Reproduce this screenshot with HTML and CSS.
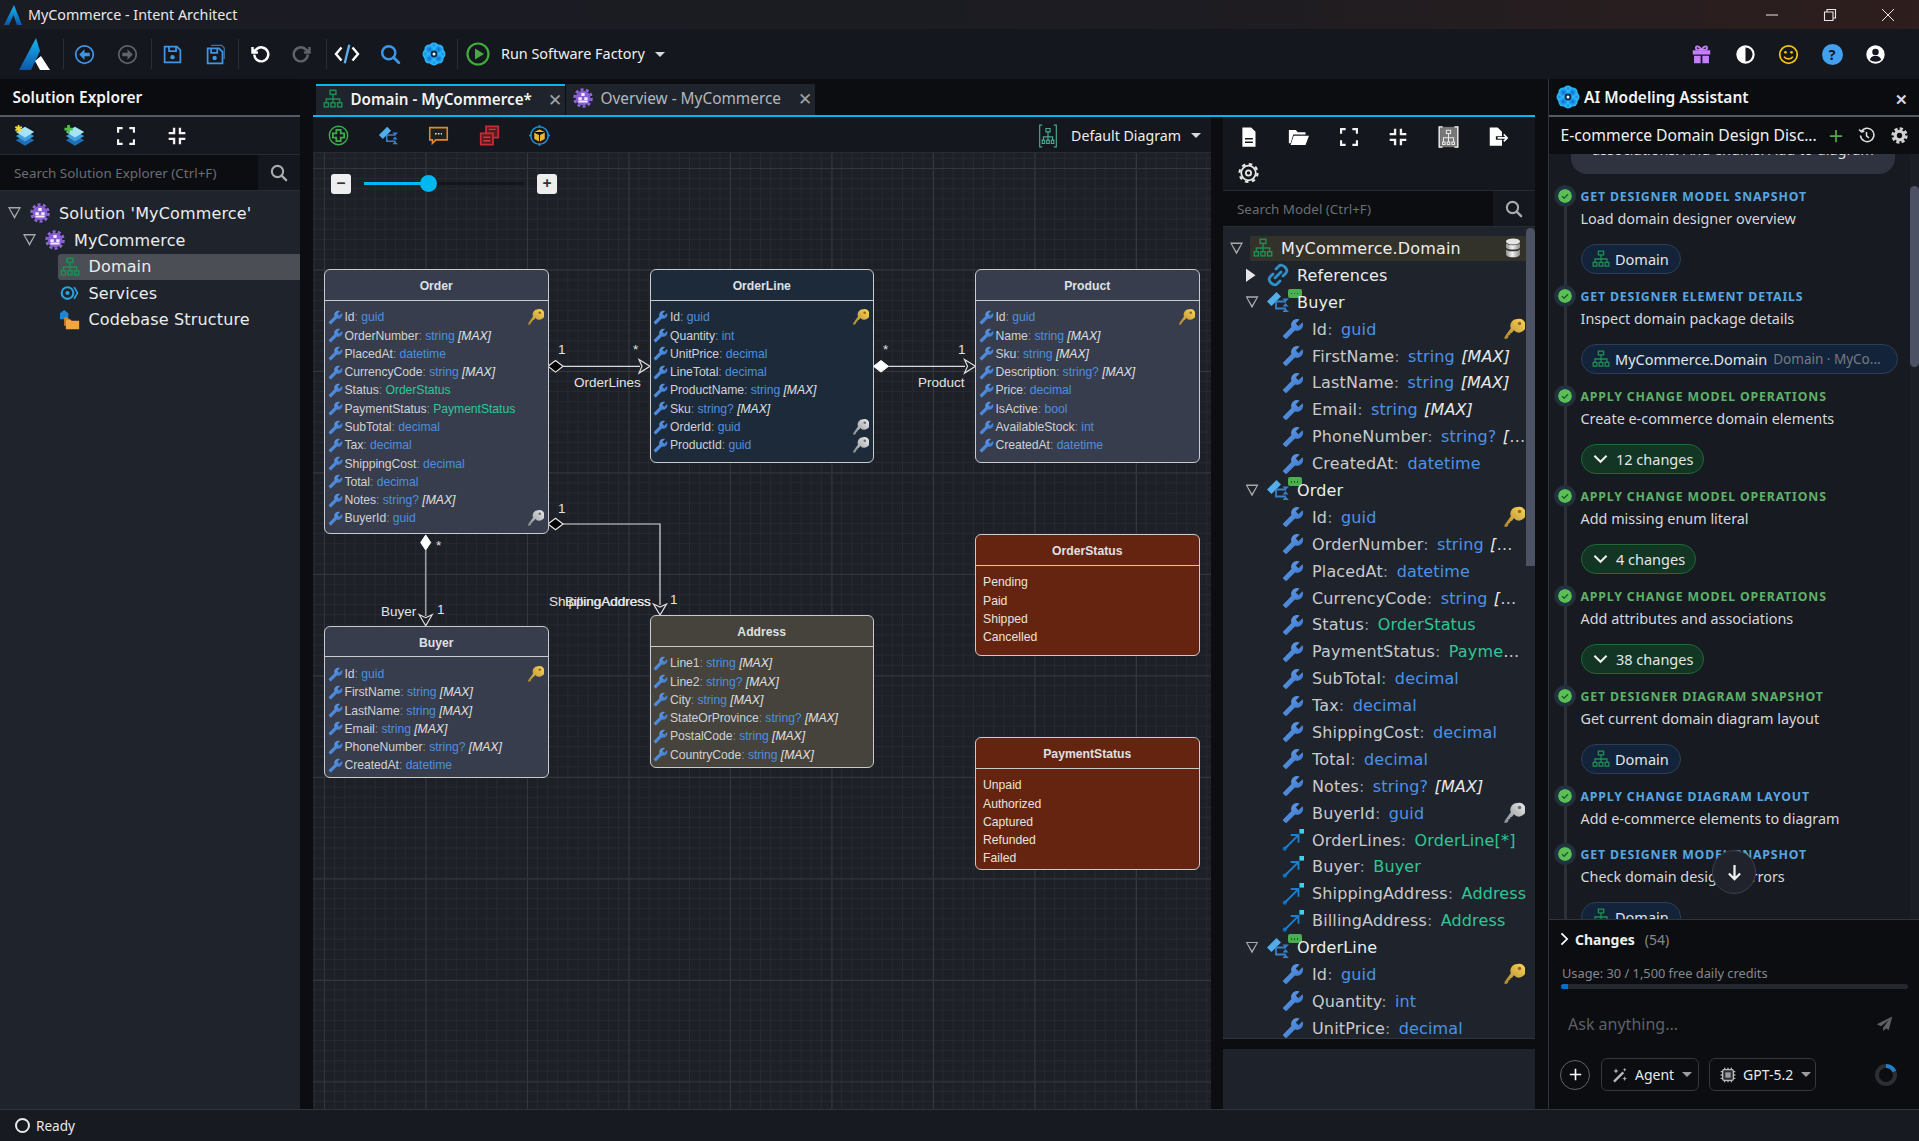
FILE: index.html
```html
<!DOCTYPE html>
<html lang="en">
<head>
    <meta charset="UTF-8">
    <title>MyCommerce - Intent Architect</title>
    <link rel="stylesheet" href="styles.css">
</head>
<body>
    <!-- Shared icons -->
    <svg class="sprite" aria-hidden="true">
        <defs>
            <linearGradient id="g-wrench" x1="0" y1="1" x2="1" y2="0">
                <stop offset="0" stop-color="#2f6cc9"/><stop offset="1" stop-color="#6da6ea"/>
            </linearGradient>
            <linearGradient id="g-gold" x1="0" y1="1" x2="1" y2="0">
                <stop offset="0" stop-color="#a9842c"/><stop offset="1" stop-color="#ffd65a"/>
            </linearGradient>
            <linearGradient id="g-silver" x1="0" y1="1" x2="1" y2="0">
                <stop offset="0" stop-color="#85888c"/><stop offset="1" stop-color="#eceded"/>
            </linearGradient>
            <linearGradient id="g-logo" x1="0" y1="0" x2="0" y2="1">
                <stop offset="0" stop-color="#16b5f2"/><stop offset="1" stop-color="#0d57a8"/>
            </linearGradient>
            <linearGradient id="g-db" x1="0" y1="0" x2="1" y2="0">
                <stop offset="0" stop-color="#8f9091"/><stop offset=".45" stop-color="#f2f2f2"/><stop offset="1" stop-color="#8a8b8c"/>
            </linearGradient>
            <radialGradient id="g-flower">
                <stop offset="0" stop-color="#0e6bd0"/><stop offset="1" stop-color="#2cc2ff"/>
            </radialGradient>
        </defs>
        <symbol id="wrench" viewBox="0 0 24 24">
            <path fill="url(#g-wrench)" transform="translate(24 0) scale(-1 1)" d="M22.7 19l-9.1-9.1c.9-2.3.4-5-1.5-6.9-2-2-5-2.4-7.4-1.3L9 6 6 9 1.6 4.7C.4 7.1.9 10.1 2.9 12.1c1.9 1.9 4.6 2.4 6.9 1.5l9.1 9.1c.4.4 1 .4 1.4 0l2.3-2.3c.5-.4.5-1.1.1-1.4z"/>
        </symbol>
        <symbol id="key" viewBox="0 0 24 24">
            <path fill="url(#g-gold)" d="M15.5 1a7.5 7.5 0 0 0-7 10.2L1.8 20.4 1.5 23l2.8-.3 1.5-1.8.2-2 1.8-.4.3-2 1.8-.5 1.9-2.6A7.5 7.5 0 1 0 15.500 1z"/>
            <circle cx="18" cy="6" r="1.900" fill="#8a6a1c"/>
        </symbol>
        <symbol id="key-silver" viewBox="0 0 24 24">
            <path fill="url(#g-silver)" d="M15.5 1a7.5 7.5 0 0 0-7 10.2L1.8 20.4 1.5 23l2.8-.3 1.5-1.8.2-2 1.8-.4.3-2 1.8-.5 1.9-2.6A7.5 7.5 0 1 0 15.500 1z"/>
            <circle cx="18" cy="6" r="1.900" fill="#6b6d70"/>
        </symbol>
        <symbol id="org" viewBox="0 0 24 24">
            <g fill="none" stroke="#1f8f52" stroke-width="1.700">
                <rect x="8.500" y="1.500" width="7" height="5"/>
                <path d="M12 6.500V12M4 16v-4h16v4M12 12v4"/>
                <rect x="1.500" y="16.500" width="5" height="5"/>
                <rect x="9.500" y="16.500" width="5" height="5"/>
                <rect x="17.500" y="16.500" width="5" height="5"/>
            </g>
        </symbol>
        <symbol id="gear-solution" viewBox="0 0 24 24">
            <circle cx="12" cy="12" r="10.200" fill="none" stroke="#9068dc" stroke-width="3" stroke-dasharray="3.600 2.800"/>
            <circle cx="12" cy="12" r="8.800" fill="#8a5fd6"/>
            <path fill="#f2ecff" d="M10 6h4v3.500h-4zM6.500 11h4v3.500h-4zM13.500 11h4v3.500h-4zM6.500 15h11v2.500h-11z"/>
        </symbol>
        <symbol id="flower" viewBox="0 0 24 24">
            <g fill="url(#g-flower)">
                <circle cx="12" cy="5.500" r="5"/><circle cx="12" cy="18.500" r="5"/>
                <circle cx="5.500" cy="12" r="5"/><circle cx="18.500" cy="12" r="5"/>
                <circle cx="7.400" cy="7.400" r="5"/><circle cx="16.600" cy="7.400" r="5"/>
                <circle cx="7.400" cy="16.600" r="5"/><circle cx="16.600" cy="16.600" r="5"/>
            </g>
            <circle cx="12" cy="12" r="3.400" fill="#0b2a4a"/>
            <circle cx="12" cy="12" r="1.500" fill="#e8f6ff"/>
        </symbol>
        <symbol id="class" viewBox="0 0 24 24">
            <path fill="#52aee8" d="M1 11.500L10.500 2l4.500 4.500L5.500 16z"/>
            <path fill="none" stroke="#3b7fc8" stroke-width="1.800" d="M10 11.500h10M10 11.500v7h10"/>
            <path fill="#3b7fc8" d="M23 8.500l-3.500 3.500-3-3.500zM23 22l-3.500-3.500-3 3.500zM19.500 13l3 3.500h-6z"/>
        </symbol>
        <symbol id="assoc" viewBox="0 0 24 24">
            <circle cx="3" cy="21.500" r="2.300" fill="#0a6fc2"/>
            <path fill="none" stroke="#1a80d0" stroke-width="2" d="M3.500 21L17 7.500M9.500 6.500H18V15"/>
            <rect x="19" y="0" width="5" height="5" fill="#3fd0ec"/>
        </symbol>
        <symbol id="stack" viewBox="0 0 24 24">
            <path fill="#1d6fb8" d="M12 11l10 5.500-10 6-10-6z"/>
            <path fill="#3fa0dc" d="M12 6.500l10 5.500-10 6-10-6z"/>
            <path fill="#a5e4f5" d="M12 2l10 5.500-10 6-10-6z"/>
        </symbol>
        <symbol id="expand" viewBox="0 0 24 24">
            <path fill="none" stroke="#f2f2f2" stroke-width="2.600" d="M2.500 8V2.500H8M16 2.500h5.500V8M21.500 16v5.500H16M8 21.500H2.500V16"/>
        </symbol>
        <symbol id="collapse" viewBox="0 0 24 24">
            <path fill="none" stroke="#f2f2f2" stroke-width="2.800" d="M8.500 2v6.500H2M15.500 2v6.500H22M15.500 22v-6.500H22M8.500 22v-6.500H2"/>
        </symbol>
        <symbol id="search" viewBox="0 0 24 24">
            <circle cx="10" cy="10" r="7.500" fill="none" stroke="currentColor" stroke-width="2.800"/>
            <path stroke="currentColor" stroke-width="3.200" stroke-linecap="round" d="M15.500 15.500l6 6"/>
        </symbol>
        <symbol id="check" viewBox="0 0 14 14">
            <circle cx="7" cy="7" r="7" fill="#5cbf56"/>
            <path fill="none" stroke="#1f5e30" stroke-width="1.500" d="M4 7.200l2.100 2.100L10 5.200"/>
        </symbol>
    </svg>

    <header class="titlebar">
        <svg class="title-logo" viewBox="0 0 18 20"><path fill="url(#g-logo)" d="M10 0l8 20h-5L9.500 10 5 20H0z"/></svg>
        <span class="title-text">MyCommerce - Intent Architect</span>
        <div class="window-controls">
            <svg viewBox="0 0 14 14"><path stroke="#e8e8e8" stroke-width="1" d="M1 7h12"/></svg>
            <svg viewBox="0 0 14 14"><path fill="none" stroke="#e8e8e8" stroke-width="1.100" d="M1.500 4h8.500v8.500H1.500zM4 4V1.500h8.500V10H10"/></svg>
            <svg viewBox="0 0 14 14"><path stroke="#e8e8e8" stroke-width="1" d="M1 1l12 12M13 1L1 13"/></svg>
        </div>
    </header>

    <nav class="toolbar">
        <svg class="main-logo" viewBox="0 0 31 32"><path fill="url(#g-logo)" d="M17 0l4 13-9 19H0z"/><path fill="#fff" d="M16 23l6-5 9 14H21z"/></svg>
        <span class="sep sep-first"></span>
        <button class="tool"><svg viewBox="0 0 24 24"><circle cx="12" cy="12" r="10" fill="none" stroke="#3f95e6" stroke-width="2"/><path fill="#3f95e6" d="M6 12l6-6v4h6v4h-6v4z"/></svg></button>
        <button class="tool"><svg viewBox="0 0 24 24"><circle cx="12" cy="12" r="10" fill="none" stroke="#5f6368" stroke-width="2"/><path fill="#5f6368" d="M18 12l-6-6v4H6v4h6v4z"/></svg></button>
        <span class="sep"></span>
        <button class="tool"><svg viewBox="0 0 24 24"><path fill="none" stroke="#3f95e6" stroke-width="2" d="M3 3h14l4 4v14H3z"/><path fill="none" stroke="#3f95e6" stroke-width="2" d="M8 3v5h8V3"/><circle cx="12" cy="15" r="2.500" fill="#3f95e6"/></svg></button>
        <button class="tool"><svg viewBox="0 0 24 24"><path fill="none" stroke="#3f6f9e" stroke-width="1.500" d="M7 1.500h12l3 3V17"/><path fill="none" stroke="#3f95e6" stroke-width="2" d="M3 5h13l4 4v13H3z"/><path fill="none" stroke="#3f95e6" stroke-width="2" d="M7 5v5h7V5"/><circle cx="11" cy="16" r="2.500" fill="#3f95e6"/></svg></button>
        <span class="sep"></span>
        <button class="tool"><svg viewBox="0 0 24 24"><path fill="none" stroke="#fff" stroke-width="2.800" d="M6 12a8 8 0 1 0 2.500-6L4 9.500M4 3.500v6.200h6.200"/></svg></button>
        <button class="tool"><svg viewBox="0 0 24 24"><path fill="none" stroke="#5f6368" stroke-width="2.800" d="M18 12a8 8 0 1 1-2.500-6L20 9.500M20 3.500v6.200h-6.200"/></svg></button>
        <span class="sep"></span>
        <button class="tool"><svg class="wide" viewBox="0 0 28 24"><path fill="none" stroke="#fff" stroke-width="2.600" d="M8 5l-6 7 6 7M20 5l6 7-6 7"/><path stroke="#5ab0ee" stroke-width="2.600" d="M16.500 2l-5 20"/></svg></button>
        <button class="tool tool-blue"><svg><use href="#search"/></svg></button>
        <button class="tool"><svg class="big" viewBox="0 0 24 24"><use href="#flower"/></svg></button>
        <span class="sep"></span>
        <button class="tool"><svg class="big" viewBox="0 0 24 24"><circle cx="12" cy="12" r="10.500" fill="none" stroke="#3fae3a" stroke-width="2.200"/><path fill="#3fae3a" d="M9 6.500l9 5.500-9 5.500z"/></svg></button>
        <span class="run-label">Run Software Factory</span>
        <span class="caret run-caret"></span>
        <div class="toolbar-right">
            <svg viewBox="0 0 24 24"><path fill="#c77dff" d="M2 7h20v5H2zM3.500 13.500h7.500V22H3.500zM13 13.500h7.500V22H13z"/><path fill="none" stroke="#c77dff" stroke-width="2" d="M12 7C9 1 4 2 6 6l6 1c3-6 8-5 6-1z"/></svg>
            <svg viewBox="0 0 24 24"><circle cx="12" cy="12" r="10.500" fill="#fff"/><path fill="#14171d" d="M12 4a8 8 0 0 1 0 16z"/></svg>
            <svg viewBox="0 0 24 24"><circle cx="12" cy="12" r="10" fill="none" stroke="#f1c40f" stroke-width="2"/><circle cx="8.500" cy="9.500" r="1.500" fill="#f1c40f"/><circle cx="15.500" cy="9.500" r="1.500" fill="#f1c40f"/><path fill="none" stroke="#f1c40f" stroke-width="2" d="M7 14.500c2 3.500 8 3.500 10 0"/></svg>
            <span class="help-icon">?</span>
            <svg viewBox="0 0 24 24"><circle cx="12" cy="12" r="10.500" fill="#fff"/><circle cx="12" cy="9" r="3.700" fill="#14171d"/><path fill="#14171d" d="M5.500 18c1.500-6 11.500-6 13 0-3 3-10 3-13 0z"/></svg>
        </div>
    </nav>

    <main class="workspace">
        <!-- Solution explorer -->
        <aside class="explorer">
            <h2 class="panel-title">Solution Explorer</h2>
            <div class="explorer-tools">
                <svg viewBox="0 0 24 24"><use href="#stack"/><path fill="#f4d83a" d="M4 0h2v2.300l2-1.100 1 1.700-2 1.100 2 1.100-1 1.700-2-1.100V8H4V5.700L2 6.800 1 5.100l2-1.100-2-1.100 1-1.700 2 1.100z"/></svg>
                <svg viewBox="0 0 24 24"><use href="#stack"/><path fill="#4cc24a" d="M3.500 0h3v3h3v3h-3v3h-3V6h-3V3h3z"/></svg>
                <svg class="small"><use href="#expand"/></svg>
                <svg class="small"><use href="#collapse"/></svg>
            </div>
            <div class="searchbox">
                <span class="search-text">Search Solution Explorer (Ctrl+F)</span>
                <span class="search-btn"><svg><use href="#search"/></svg></span>
            </div>
            <ul class="tree sol-tree">
                <li class="sol-row lvl0"><span class="twist open"></span><svg class="ti"><use href="#gear-solution"/></svg><span>Solution 'MyCommerce'</span></li>
                <li class="sol-row lvl1"><span class="twist open"></span><svg class="ti"><use href="#gear-solution"/></svg><span>MyCommerce</span></li>
                <li class="sol-row lvl2 selected"><svg class="ti"><use href="#org"/></svg><span>Domain</span></li>
                <li class="sol-row lvl2"><svg class="ti" viewBox="0 0 24 24"><circle cx="9" cy="12" r="7" fill="none" stroke="#2ba3dd" stroke-width="2.500"/><circle cx="9" cy="12" r="2.500" fill="#2ba3dd"/><path fill="none" stroke="#2ba3dd" stroke-width="2" d="M17 5l4 7-4 7"/></svg><span>Services</span></li>
                <li class="sol-row lvl2"><svg class="ti" viewBox="0 0 24 24"><path fill="#1b87d6" d="M0 4l5-4 5 4v7H0z"/><path fill="#f3a640" d="M7 11h5l2 2h9v10H7z"/><path fill="#d8872a" d="M5 9h4l2 2H7v8H5z"/></svg><span>Codebase Structure</span></li>
            </ul>
        </aside>

        <section class="editor">
            <div class="tabs">
                <div class="tab active"><svg class="tab-icon"><use href="#org"/></svg><span>Domain - MyCommerce*</span><span class="tab-close">&#10005;</span></div>
                <div class="tab"><svg class="tab-icon"><use href="#gear-solution"/></svg><span>Overview - MyCommerce</span><span class="tab-close">&#10005;</span></div>
            </div>
            <div class="editor-body">
                <div class="designer">
                    <div class="designer-tools">
                        <svg viewBox="0 0 24 24"><circle cx="12" cy="12" r="10.500" fill="none" stroke="#3fae4a" stroke-width="1.600"/><path fill="none" stroke="#3fae4a" stroke-width="2" d="M9.500 5.500h5v4h4v5h-4v4h-5v-4h-4v-5h4z"/></svg>
                        <svg><use href="#class"/></svg>
                        <svg viewBox="0 0 24 24"><path fill="#22201c" stroke="#e08a2a" stroke-width="1.800" d="M2 3h20v14H9l-4 4v-4H2z"/><path stroke="#e8e8e8" stroke-width="1.800" stroke-dasharray="1.800 1.500" d="M8 10h8"/></svg>
                        <svg viewBox="0 0 24 24"><path fill="#5a1a22" stroke="#c52c36" stroke-width="2" d="M8 1.500h14v13H8z"/><path fill="#5a1a22" stroke="#c52c36" stroke-width="2" d="M2 9.500h14v13H2z"/><path stroke="#d8343c" stroke-width="1.600" d="M5 14h8M5 18h8M11 5h8"/></svg>
                        <svg viewBox="0 0 24 24"><circle cx="12" cy="12" r="10" fill="none" stroke="#1f8fe0" stroke-width="1.800"/><path stroke="#1f8fe0" stroke-width="1.800" d="M12 0v3M12 21v3M0 12h3M21 12h3"/><path fill="#f3b32c" d="M12 5l6 3v8l-6 3-6-3V8z"/><path stroke="#14171d" stroke-width="1.200" d="M6 8l6 3 6-3M12 11v8"/></svg>
                        <div class="diagram-select">
                            <svg viewBox="0 0 24 28"><path fill="none" stroke="#4aa890" stroke-width="1.400" d="M5 1H2v26h3M19 1h3v26h-3M9.500 5h5v4h-5zM12 9v6M6.500 19v-4h11v4M12 15v4M5 19h3v4H5zM10.500 19h3v4h-3zM16 19h3v4h-3z"/></svg>
                            <span>Default Diagram</span>
                            <span class="caret"></span>
                        </div>
                    </div>
                    <div class="canvas">
                        <div class="zoomer">
                            <span class="zoom-btn">&minus;</span>
                            <span class="zoom-track"><span class="zoom-fill"></span><span class="zoom-thumb"></span></span>
                            <span class="zoom-btn">+</span>
                        </div>

                        <svg class="links">
                            <path class="link" d="M250 213.300H327"/>
                            <path class="link" d="M575.600 213.300H652"/>
                            <path class="link" d="M250 371H347V452"/>
                            <path class="link link-grey" d="M112.700 397V463"/>
                            <path class="tip" d="M337 213.300l-11-6.800 3 6.800-3 6.800z"/>
                            <path class="tip" d="M662.500 213.300l-11-6.800 3 6.800-3 6.800z"/>
                            <path class="tip" d="M347 462l-6.500-11 6.500 3 6.500-3z"/>
                            <path class="tip" d="M112.700 472.700l-6.500-11 6.500 3 6.500-3z"/>
                            <path class="diamond" d="M235 213.300l7.500-5.800 7.500 5.800-7.500 5.800z"/>
                            <path class="diamond" d="M235 371l7.500-5.800 7.500 5.800-7.500 5.800z"/>
                            <path class="diamond-white" d="M560.500 213.300l7.500-5.800 7.500 5.800-7.500 5.800z"/>
                            <path class="diamond-white" d="M112.700 382l5 7.500-5 7.500-5-7.500z"/>
                            <text x="245" y="201">1</text>
                            <text x="320" y="201">*</text>
                            <text x="261" y="234">OrderLines</text>
                            <text x="570" y="201">*</text>
                            <text x="645" y="201">1</text>
                            <text x="605" y="234">Product</text>
                            <text x="245" y="360">1</text>
                            <text x="357" y="451">1</text>
                            <text x="236" y="453">ShippingAddress</text>
                            <text x="252" y="453">BillingAddress</text>
                            <text x="68" y="463">Buyer</text>
                            <text x="124" y="461">1</text>
                            <text x="123" y="397">*</text>
                        </svg>

                        <div class="node node-order">
                            <div class="node-head">Order</div>
                            <div class="node-body">
                                <div class="attr"><svg class="w"><use href="#wrench"/></svg><span>Id<i class="c">:</i> <b>guid</b></span><svg class="k"><use href="#key"/></svg></div>
                                <div class="attr"><svg class="w"><use href="#wrench"/></svg><span>OrderNumber<i class="c">:</i> <b>string</b> <em>[MAX]</em></span></div>
                                <div class="attr"><svg class="w"><use href="#wrench"/></svg><span>PlacedAt<i class="c">:</i> <b>datetime</b></span></div>
                                <div class="attr"><svg class="w"><use href="#wrench"/></svg><span>CurrencyCode<i class="c">:</i> <b>string</b> <em>[MAX]</em></span></div>
                                <div class="attr"><svg class="w"><use href="#wrench"/></svg><span>Status<i class="c">:</i> <b class="enum">OrderStatus</b></span></div>
                                <div class="attr"><svg class="w"><use href="#wrench"/></svg><span>PaymentStatus<i class="c">:</i> <b class="enum">PaymentStatus</b></span></div>
                                <div class="attr"><svg class="w"><use href="#wrench"/></svg><span>SubTotal<i class="c">:</i> <b>decimal</b></span></div>
                                <div class="attr"><svg class="w"><use href="#wrench"/></svg><span>Tax<i class="c">:</i> <b>decimal</b></span></div>
                                <div class="attr"><svg class="w"><use href="#wrench"/></svg><span>ShippingCost<i class="c">:</i> <b>decimal</b></span></div>
                                <div class="attr"><svg class="w"><use href="#wrench"/></svg><span>Total<i class="c">:</i> <b>decimal</b></span></div>
                                <div class="attr"><svg class="w"><use href="#wrench"/></svg><span>Notes<i class="c">:</i> <b>string?</b> <em>[MAX]</em></span></div>
                                <div class="attr"><svg class="w"><use href="#wrench"/></svg><span>BuyerId<i class="c">:</i> <b>guid</b></span><svg class="k"><use href="#key-silver"/></svg></div>
                            </div>
                        </div>

                        <div class="node node-line">
                            <div class="node-head">OrderLine</div>
                            <div class="node-body">
                                <div class="attr"><svg class="w"><use href="#wrench"/></svg><span>Id<i class="c">:</i> <b>guid</b></span><svg class="k"><use href="#key"/></svg></div>
                                <div class="attr"><svg class="w"><use href="#wrench"/></svg><span>Quantity<i class="c">:</i> <b>int</b></span></div>
                                <div class="attr"><svg class="w"><use href="#wrench"/></svg><span>UnitPrice<i class="c">:</i> <b>decimal</b></span></div>
                                <div class="attr"><svg class="w"><use href="#wrench"/></svg><span>LineTotal<i class="c">:</i> <b>decimal</b></span></div>
                                <div class="attr"><svg class="w"><use href="#wrench"/></svg><span>ProductName<i class="c">:</i> <b>string</b> <em>[MAX]</em></span></div>
                                <div class="attr"><svg class="w"><use href="#wrench"/></svg><span>Sku<i class="c">:</i> <b>string?</b> <em>[MAX]</em></span></div>
                                <div class="attr"><svg class="w"><use href="#wrench"/></svg><span>OrderId<i class="c">:</i> <b>guid</b></span><svg class="k"><use href="#key-silver"/></svg></div>
                                <div class="attr"><svg class="w"><use href="#wrench"/></svg><span>ProductId<i class="c">:</i> <b>guid</b></span><svg class="k"><use href="#key-silver"/></svg></div>
                            </div>
                        </div>

                        <div class="node node-product">
                            <div class="node-head">Product</div>
                            <div class="node-body">
                                <div class="attr"><svg class="w"><use href="#wrench"/></svg><span>Id<i class="c">:</i> <b>guid</b></span><svg class="k"><use href="#key"/></svg></div>
                                <div class="attr"><svg class="w"><use href="#wrench"/></svg><span>Name<i class="c">:</i> <b>string</b> <em>[MAX]</em></span></div>
                                <div class="attr"><svg class="w"><use href="#wrench"/></svg><span>Sku<i class="c">:</i> <b>string</b> <em>[MAX]</em></span></div>
                                <div class="attr"><svg class="w"><use href="#wrench"/></svg><span>Description<i class="c">:</i> <b>string?</b> <em>[MAX]</em></span></div>
                                <div class="attr"><svg class="w"><use href="#wrench"/></svg><span>Price<i class="c">:</i> <b>decimal</b></span></div>
                                <div class="attr"><svg class="w"><use href="#wrench"/></svg><span>IsActive<i class="c">:</i> <b>bool</b></span></div>
                                <div class="attr"><svg class="w"><use href="#wrench"/></svg><span>AvailableStock<i class="c">:</i> <b>int</b></span></div>
                                <div class="attr"><svg class="w"><use href="#wrench"/></svg><span>CreatedAt<i class="c">:</i> <b>datetime</b></span></div>
                            </div>
                        </div>

                        <div class="node node-buyer">
                            <div class="node-head">Buyer</div>
                            <div class="node-body">
                                <div class="attr"><svg class="w"><use href="#wrench"/></svg><span>Id<i class="c">:</i> <b>guid</b></span><svg class="k"><use href="#key"/></svg></div>
                                <div class="attr"><svg class="w"><use href="#wrench"/></svg><span>FirstName<i class="c">:</i> <b>string</b> <em>[MAX]</em></span></div>
                                <div class="attr"><svg class="w"><use href="#wrench"/></svg><span>LastName<i class="c">:</i> <b>string</b> <em>[MAX]</em></span></div>
                                <div class="attr"><svg class="w"><use href="#wrench"/></svg><span>Email<i class="c">:</i> <b>string</b> <em>[MAX]</em></span></div>
                                <div class="attr"><svg class="w"><use href="#wrench"/></svg><span>PhoneNumber<i class="c">:</i> <b>string?</b> <em>[MAX]</em></span></div>
                                <div class="attr"><svg class="w"><use href="#wrench"/></svg><span>CreatedAt<i class="c">:</i> <b>datetime</b></span></div>
                            </div>
                        </div>

                        <div class="node node-address">
                            <div class="node-head">Address</div>
                            <div class="node-body">
                                <div class="attr"><svg class="w"><use href="#wrench"/></svg><span>Line1<i class="c">:</i> <b>string</b> <em>[MAX]</em></span></div>
                                <div class="attr"><svg class="w"><use href="#wrench"/></svg><span>Line2<i class="c">:</i> <b>string?</b> <em>[MAX]</em></span></div>
                                <div class="attr"><svg class="w"><use href="#wrench"/></svg><span>City<i class="c">:</i> <b>string</b> <em>[MAX]</em></span></div>
                                <div class="attr"><svg class="w"><use href="#wrench"/></svg><span>StateOrProvince<i class="c">:</i> <b>string?</b> <em>[MAX]</em></span></div>
                                <div class="attr"><svg class="w"><use href="#wrench"/></svg><span>PostalCode<i class="c">:</i> <b>string</b> <em>[MAX]</em></span></div>
                                <div class="attr"><svg class="w"><use href="#wrench"/></svg><span>CountryCode<i class="c">:</i> <b>string</b> <em>[MAX]</em></span></div>
                            </div>
                        </div>

                        <div class="node node-enum node-status">
                            <div class="node-head">OrderStatus</div>
                            <div class="node-body">
                                <div class="literal">Pending</div>
                                <div class="literal">Paid</div>
                                <div class="literal">Shipped</div>
                                <div class="literal">Cancelled</div>
                            </div>
                        </div>

                        <div class="node node-enum node-payment">
                            <div class="node-head">PaymentStatus</div>
                            <div class="node-body">
                                <div class="literal">Unpaid</div>
                                <div class="literal">Authorized</div>
                                <div class="literal">Captured</div>
                                <div class="literal">Refunded</div>
                                <div class="literal">Failed</div>
                            </div>
                        </div>
                    </div>
                </div>

                <!-- Model tree -->
                <div class="model">
                    <div class="model-tools">
                        <svg viewBox="0 0 24 24"><path fill="#fff" d="M5 1h10l5 5v17H5z"/><path stroke="#14171d" stroke-width="1.800" d="M8 14h9M8 18h9"/></svg>
                        <svg viewBox="0 0 24 24"><path fill="#fff" d="M1 4h8l2 2.500h9V9H6L3 19H1z"/><path fill="#fff" d="M6.500 10.500H24L20 21H3z"/></svg>
                        <svg class="small"><use href="#expand"/></svg>
                        <svg class="small"><use href="#collapse"/></svg>
                        <svg viewBox="0 0 24 26"><path fill="#777" d="M2 1h20v24H2z"/><path fill="none" stroke="#fff" stroke-width="1.600" d="M5 1H1v24h4M19 1h4v24h-4"/><path fill="none" stroke="#e8e8e8" stroke-width="1.200" d="M9.500 5h5v4h-5zM12 9v5M6 19v-5h12v5M12 14v5M5 19h3v3H5zM10.500 19h3v3h-3zM16 19h3v3h-3z"/></svg>
                        <svg viewBox="0 0 24 24"><path fill="#fff" d="M2 1h9l5 5v5H9v4h7v7H2z"/><path fill="none" stroke="#fff" stroke-width="1.800" d="M11 13h11M18 9l4 4-4 4"/></svg>
                        <svg viewBox="0 0 24 24"><circle cx="12" cy="12" r="8.300" fill="none" stroke="#e8e8e8" stroke-width="2"/><circle cx="12" cy="12" r="10.300" fill="none" stroke="#e8e8e8" stroke-width="2.500" stroke-dasharray="4 4.090"/><circle cx="12" cy="12" r="3" fill="none" stroke="#e8e8e8" stroke-width="2"/></svg>
                    </div>
                    <div class="searchbox">
                        <span class="search-text">Search Model (Ctrl+F)</span>
                        <span class="search-btn"><svg><use href="#search"/></svg></span>
                    </div>
                    <div class="model-tree">
                        <div class="scroll-thumb"></div>
                        <ul class="tree">
                            <li class="m-row m-root"><span class="twist open"></span><span class="root-band"><svg class="ti"><use href="#org"/></svg><span>MyCommerce.Domain</span><svg class="db" viewBox="0 0 20 24"><ellipse cx="10" cy="4" rx="8" ry="3.500" fill="#e4e4e4"/><path fill="url(#g-db)" d="M2 6c2 3 14 3 16 0v5c-2 3-14 3-16 0zM2 13c2 3 14 3 16 0v6c-2 4-14 4-16 0z"/></svg></span></li>
                            <li class="m-row m-class"><span class="twist closed"></span><svg class="ti" viewBox="0 0 24 24"><path fill="none" stroke="#2f8fc9" stroke-width="2.800" stroke-linecap="round" d="M10 6l3-3c3-3 10 3 7 7l-3 3M14 18l-3 3c-3 3-10-3-7-7l3-3M9 15l6-6"/></svg><span>References</span></li>

                            <li class="m-row m-class"><span class="twist open"></span><svg class="ti"><use href="#class"/></svg><span class="m-note"></span><span class="m-name">Buyer</span></li>
                            <li class="m-row m-attr"><svg class="ti"><use href="#wrench"/></svg><span class="m-text">Id<i class="c">:</i> <b>guid</b></span><svg class="m-key"><use href="#key"/></svg></li>
                            <li class="m-row m-attr"><svg class="ti"><use href="#wrench"/></svg><span class="m-text">FirstName<i class="c">:</i> <b>string</b> <em>[MAX]</em></span></li>
                            <li class="m-row m-attr"><svg class="ti"><use href="#wrench"/></svg><span class="m-text">LastName<i class="c">:</i> <b>string</b> <em>[MAX]</em></span></li>
                            <li class="m-row m-attr"><svg class="ti"><use href="#wrench"/></svg><span class="m-text">Email<i class="c">:</i> <b>string</b> <em>[MAX]</em></span></li>
                            <li class="m-row m-attr"><svg class="ti"><use href="#wrench"/></svg><span class="m-text">PhoneNumber<i class="c">:</i> <b>string?</b> <em>[MAX]</em></span></li>
                            <li class="m-row m-attr"><svg class="ti"><use href="#wrench"/></svg><span class="m-text">CreatedAt<i class="c">:</i> <b>datetime</b></span></li>

                            <li class="m-row m-class"><span class="twist open"></span><svg class="ti"><use href="#class"/></svg><span class="m-note"></span><span class="m-name">Order</span></li>
                            <li class="m-row m-attr"><svg class="ti"><use href="#wrench"/></svg><span class="m-text">Id<i class="c">:</i> <b>guid</b></span><svg class="m-key"><use href="#key"/></svg></li>
                            <li class="m-row m-attr"><svg class="ti"><use href="#wrench"/></svg><span class="m-text">OrderNumber<i class="c">:</i> <b>string</b> <em>[MAX]</em></span></li>
                            <li class="m-row m-attr"><svg class="ti"><use href="#wrench"/></svg><span class="m-text">PlacedAt<i class="c">:</i> <b>datetime</b></span></li>
                            <li class="m-row m-attr"><svg class="ti"><use href="#wrench"/></svg><span class="m-text">CurrencyCode<i class="c">:</i> <b>string</b> <em>[MAX]</em></span></li>
                            <li class="m-row m-attr"><svg class="ti"><use href="#wrench"/></svg><span class="m-text">Status<i class="c">:</i> <b class="enum">OrderStatus</b></span></li>
                            <li class="m-row m-attr"><svg class="ti"><use href="#wrench"/></svg><span class="m-text">PaymentStatus<i class="c">:</i> <b class="enum">PaymentStatus</b></span></li>
                            <li class="m-row m-attr"><svg class="ti"><use href="#wrench"/></svg><span class="m-text">SubTotal<i class="c">:</i> <b>decimal</b></span></li>
                            <li class="m-row m-attr"><svg class="ti"><use href="#wrench"/></svg><span class="m-text">Tax<i class="c">:</i> <b>decimal</b></span></li>
                            <li class="m-row m-attr"><svg class="ti"><use href="#wrench"/></svg><span class="m-text">ShippingCost<i class="c">:</i> <b>decimal</b></span></li>
                            <li class="m-row m-attr"><svg class="ti"><use href="#wrench"/></svg><span class="m-text">Total<i class="c">:</i> <b>decimal</b></span></li>
                            <li class="m-row m-attr"><svg class="ti"><use href="#wrench"/></svg><span class="m-text">Notes<i class="c">:</i> <b>string?</b> <em>[MAX]</em></span></li>
                            <li class="m-row m-attr"><svg class="ti"><use href="#wrench"/></svg><span class="m-text">BuyerId<i class="c">:</i> <b>guid</b></span><svg class="m-key"><use href="#key-silver"/></svg></li>
                            <li class="m-row m-attr"><svg class="ti"><use href="#assoc"/></svg><span class="m-text m-free">OrderLines<i class="c">:</i> <b class="enum">OrderLine[*]</b></span></li>
                            <li class="m-row m-attr"><svg class="ti"><use href="#assoc"/></svg><span class="m-text m-free">Buyer<i class="c">:</i> <b class="enum">Buyer</b></span></li>
                            <li class="m-row m-attr"><svg class="ti"><use href="#assoc"/></svg><span class="m-text m-free">ShippingAddress<i class="c">:</i> <b class="enum">Address</b></span></li>
                            <li class="m-row m-attr"><svg class="ti"><use href="#assoc"/></svg><span class="m-text m-free">BillingAddress<i class="c">:</i> <b class="enum">Address</b></span></li>

                            <li class="m-row m-class"><span class="twist open"></span><svg class="ti"><use href="#class"/></svg><span class="m-note"></span><span class="m-name">OrderLine</span></li>
                            <li class="m-row m-attr"><svg class="ti"><use href="#wrench"/></svg><span class="m-text">Id<i class="c">:</i> <b>guid</b></span><svg class="m-key"><use href="#key"/></svg></li>
                            <li class="m-row m-attr"><svg class="ti"><use href="#wrench"/></svg><span class="m-text">Quantity<i class="c">:</i> <b>int</b></span></li>
                            <li class="m-row m-attr"><svg class="ti"><use href="#wrench"/></svg><span class="m-text">UnitPrice<i class="c">:</i> <b>decimal</b></span></li>
                        </ul>
                    </div>
                    <div class="model-gap"></div>
                    <div class="model-foot"></div>
                </div>
            </div>
        </section>

        <!-- Assistant -->
        <aside class="assistant">
            <div class="assistant-head">
                <svg class="ai-logo"><use href="#flower"/></svg>
                <h2>AI Modeling Assistant</h2>
                <span class="ai-close">&#10005;</span>
            </div>
            <div class="chat-bar">
                <span class="chat-title">E-commerce Domain Design Disc...</span>
                <svg class="chat-add" viewBox="0 0 16 16"><path stroke="#55a64f" stroke-width="2" d="M8 1v14M1 8h14"/></svg>
                <svg class="chat-icon" viewBox="0 0 24 24"><path fill="none" stroke="#e0e0e0" stroke-width="2.200" d="M5 6a9.500 9.500 0 1 1-1.500 6M1.500 3.500L5 7l4-1M12 7v5.500l3.500 3"/></svg>
                <svg class="chat-icon" viewBox="0 0 24 24"><circle cx="12" cy="12" r="6" fill="none" stroke="#d0d0d0" stroke-width="4.500"/><circle cx="12" cy="12" r="9.500" fill="none" stroke="#d0d0d0" stroke-width="4" stroke-dasharray="4.500 2.960"/></svg>
            </div>
            <div class="chat">
                <div class="chat-thumb"></div>
                <div class="bubble">associations. And enums. Add to diagram</div>

                <div class="step">
                    <svg class="dot"><use href="#check"/></svg>
                    <div class="step-label">Get Designer Model Snapshot</div>
                    <div class="step-desc">Load domain designer overview</div>
                    <div class="pill"><svg class="pill-icon"><use href="#org"/></svg><span>Domain</span></div>
                </div>
                <div class="step">
                    <svg class="dot"><use href="#check"/></svg>
                    <div class="step-label">Get Designer Element Details</div>
                    <div class="step-desc">Inspect domain package details</div>
                    <div class="pill pill-wide"><svg class="pill-icon"><use href="#org"/></svg><span>MyCommerce.Domain</span><span class="pill-sub">Domain · MyCo...</span></div>
                </div>
                <div class="step">
                    <svg class="dot"><use href="#check"/></svg>
                    <div class="step-label green">Apply Change Model Operations</div>
                    <div class="step-desc">Create e-commerce domain elements</div>
                    <div class="pill pill-green"><svg class="pill-chev" viewBox="0 0 16 10"><path fill="none" stroke="#eee" stroke-width="2.200" d="M1.500 1.500L8 8l6.500-6.500"/></svg><span>12 changes</span></div>
                </div>
                <div class="step">
                    <svg class="dot"><use href="#check"/></svg>
                    <div class="step-label green">Apply Change Model Operations</div>
                    <div class="step-desc">Add missing enum literal</div>
                    <div class="pill pill-green"><svg class="pill-chev" viewBox="0 0 16 10"><path fill="none" stroke="#eee" stroke-width="2.200" d="M1.500 1.500L8 8l6.500-6.500"/></svg><span>4 changes</span></div>
                </div>
                <div class="step">
                    <svg class="dot"><use href="#check"/></svg>
                    <div class="step-label green">Apply Change Model Operations</div>
                    <div class="step-desc">Add attributes and associations</div>
                    <div class="pill pill-green"><svg class="pill-chev" viewBox="0 0 16 10"><path fill="none" stroke="#eee" stroke-width="2.200" d="M1.500 1.500L8 8l6.500-6.500"/></svg><span>38 changes</span></div>
                </div>
                <div class="step">
                    <svg class="dot"><use href="#check"/></svg>
                    <div class="step-label green">Get Designer Diagram Snapshot</div>
                    <div class="step-desc">Get current domain diagram layout</div>
                    <div class="pill"><svg class="pill-icon"><use href="#org"/></svg><span>Domain</span></div>
                </div>
                <div class="step step-short">
                    <svg class="dot"><use href="#check"/></svg>
                    <div class="step-label">Apply Change Diagram Layout</div>
                    <div class="step-desc">Add e-commerce elements to diagram</div>
                </div>
                <div class="step">
                    <svg class="dot"><use href="#check"/></svg>
                    <div class="step-label">Get Designer Model Snapshot</div>
                    <div class="step-desc">Check domain designer errors</div>
                    <div class="pill"><svg class="pill-icon"><use href="#org"/></svg><span>Domain</span></div>
                </div>

                <button class="scroll-down"><svg viewBox="0 0 16 18"><path fill="none" stroke="#f0f0f0" stroke-width="2.400" d="M8 1v15M2 10l6 6 6-6"/></svg></button>
            </div>
            <div class="composer">
                <div class="changes">
                    <svg class="changes-chev" viewBox="0 0 10 16"><path fill="none" stroke="#fff" stroke-width="2" d="M1.500 1.500L8 8l-6.500 6.500"/></svg>
                    <strong>Changes</strong>
                    <span>(54)</span>
                </div>
                <div class="usage">Usage: 30 / 1,500 free daily credits</div>
                <div class="usage-bar"><span class="usage-fill"></span></div>
                <div class="ask">
                    <span>Ask anything...</span>
                    <svg viewBox="0 0 24 24"><path fill="#5c5f63" d="M23 2L1 13l6 3 11-9-8 11v5l4-4 4 2z"/></svg>
                </div>
                <div class="composer-tools">
                    <span class="round-add"><svg viewBox="0 0 16 16"><path stroke="#fff" stroke-width="2" d="M8 1v14M1 8h14"/></svg></span>
                    <span class="mode-btn mode-agent"><svg viewBox="0 0 24 24"><path stroke="#b8babd" stroke-width="3.500" d="M3 22L17 8"/><path fill="#b8babd" d="M6 2l1 3 3 1-3 1-1 3-1-3-3-1 3-1zM19 14l1 2.500 2.500 1-2.500 1-1 2.500-1-2.500-2.500-1 2.500-1zM19 1l.8 2.200L22 4l-2.200.8L19 7l-.8-2.200L16 4l2.200-.8z"/></svg><span>Agent</span><span class="caret"></span></span>
                    <span class="mode-btn mode-model"><svg viewBox="0 0 24 24"><path stroke="#b8babd" stroke-width="2" d="M7 1v22M12 1v22M17 1v22M1 7h22M1 12h22M1 17h22"/><rect x="4" y="4" width="16" height="16" rx="2" fill="#2a2c30" stroke="#b8babd" stroke-width="2"/><rect x="8" y="8" width="8" height="8" fill="#9a9c9f"/></svg><span>GPT-5.2</span><span class="caret"></span></span>
                    <svg class="spinner" viewBox="0 0 22 22"><circle cx="11" cy="11" r="9" fill="none" stroke="#2b2e33" stroke-width="4"/><path fill="none" stroke="#1f7fc9" stroke-width="4" d="M11 2a9 9 0 0 1 8.300 5.500"/></svg>
                </div>
            </div>
        </aside>
    </main>

    <footer class="statusbar">
        <span class="status-ring"></span>
        <span>Ready</span>
    </footer>
</body>
</html>
```

FILE: styles.css
```css
* {
    box-sizing: border-box;
}
html, body {
    margin: 0;
    height: 100%;
    overflow: hidden;
}
body {
    display: flex;
    flex-direction: column;
    width: 1919px;
    height: 1141px;
    background: #0b0d10;
    color: #e6e7e9;
    font-family: "Noto Sans", sans-serif;
    font-size: 14px;
}
ul {
    list-style: none;
    margin: 0;
    padding: 0;
}
h2 {
    margin: 0;
}
button {
    border: none;
    background: none;
    padding: 0;
}
.sprite {
    position: absolute;
    width: 0;
    height: 0;
}

/* Title bar */
.titlebar {
    height: 29px;
    display: flex;
    align-items: center;
    padding-left: 2px;
    background: linear-gradient(90deg, #1a1c23 0%, #1c1c22 60%, #2e1e1d 100%);
}
.title-logo {
    width: 20px;
    height: 20px;
    margin-left: 1px;
}
.title-text {
    margin-left: 5px;
    font-size: 14.300px;
    color: #e8e8e8;
}
.window-controls {
    margin-left: auto;
    display: flex;
    gap: 44px;
    padding-right: 24px;
}
.window-controls svg {
    width: 14px;
    height: 14px;
}

/* Main toolbar */
.toolbar {
    height: 50px;
    display: flex;
    align-items: center;
    padding-left: 19px;
    background: #14171d;
}
.main-logo {
    width: 31px;
    height: 32px;
}
.sep {
    width: 1px;
    height: 30px;
    background: #2a2e36;
}
.sep-first {
    margin-left: 13px;
}
.tool {
    width: 41px;
    height: 30px;
    margin-right: 2.300px;
    display: flex;
    align-items: center;
    justify-content: center;
    color: #fff;
}
.tool svg {
    width: 21px;
    height: 21px;
}
.tool svg.big {
    width: 24px;
    height: 24px;
}
.tool svg.wide {
    width: 26px;
    height: 22px;
}
.tool-blue {
    color: #3f95e6;
}
.run-label {
    padding-bottom: 2px;
    font-size: 14.400px;
    color: #f0f0f0;
}
.caret {
    display: inline-block;
    width: 0;
    height: 0;
    border-left: 5px solid transparent;
    border-right: 5px solid transparent;
    border-top: 5px solid #d8d8d8;
}
.run-caret {
    margin-left: 10px;
}
.toolbar-right {
    margin-left: auto;
    display: flex;
    align-items: center;
    gap: 22.500px;
    padding-right: 33px;
}
.toolbar-right svg {
    width: 21px;
    height: 21px;
}
.help-icon {
    width: 21px;
    height: 21px;
    border-radius: 50%;
    background: #42a0ee;
    color: #14171d;
    font-size: 14px;
    font-weight: 700;
    line-height: 21px;
    text-align: center;
}

/* Workspace */
.workspace {
    flex: 1;
    display: flex;
    min-height: 0;
}
.explorer {
    width: 300px;
    display: flex;
    flex-direction: column;
    background: #1f242c;
}
.panel-title {
    height: 38px;
    padding: 0 0 0 12.500px;
    font-size: 15.500px;
    font-weight: 600;
    line-height: 36px;
    color: #f4f4f4;
    background: #0a0c0f;
    border-bottom: 2px solid #555a66;
}
.explorer-tools {
    height: 37px;
    display: flex;
    align-items: center;
    padding-left: 14px;
    gap: 28px;
    background: #15181e;
}
.explorer-tools svg {
    width: 22px;
    height: 22px;
}
.explorer-tools svg.small {
    width: 20px;
    height: 20px;
    margin-left: 2px;
    margin-right: 1px;
}
.searchbox {
    height: 37px;
    flex: none;
    display: flex;
    background: #0b0d10;
    border-top: 1px solid #272b33;
    border-bottom: 1px solid #272b33;
}
.search-text {
    flex: 1;
    padding-left: 14px;
    font-size: 13.400px;
    line-height: 37px;
    color: #6a6d73;
}
.search-btn {
    width: 42px;
    display: flex;
    align-items: center;
    justify-content: center;
    background: #14171d;
    color: #a8aaae;
}
.search-btn svg {
    width: 18px;
    height: 18px;
}

/* Trees */
.tree {
    font-family: "DejaVu Sans", sans-serif;
    font-size: 16px;
    letter-spacing: 0.150px;
    color: #eceded;
}
.sol-tree {
    padding-top: 8.500px;
}
.sol-row {
    height: 27px;
    display: flex;
    align-items: center;
}
.lvl0 {
    padding-left: 8px;
}
.lvl1 {
    padding-left: 23px;
}
.lvl2 {
    margin-left: 58px;
    padding-left: 2px;
    height: 26.600px;
}
.selected {
    background: #4c4e55;
    border-radius: 3px 0 0 3px;
}
.twist {
    flex: none;
    width: 13px;
    height: 12px;
}
.twist.open {
    background: #a8a9ac;
    clip-path: polygon(0 0, 100% 0, 50% 100%, 0 0, 2px 1.500px, 50% calc(100% - 3px), calc(100% - 2px) 1.500px, 2px 1.500px);
}
.twist.closed {
    width: 10px;
    height: 14px;
    margin-right: 3px;
    background: #e6e6e6;
    clip-path: polygon(0 0, 100% 50%, 0 100%);
}
.ti {
    flex: none;
    width: 20px;
    height: 20px;
}
.lvl0 .ti, .lvl1 .ti {
    margin: 0 9px 0 9px;
}
.lvl2 .ti {
    margin-right: 8.500px;
}

/* Editor */
.editor {
    width: 1222px;
    margin-left: 13px;
    display: flex;
    flex-direction: column;
}
.tabs {
    height: 38px;
    flex: none;
    display: flex;
    padding: 5px 0 0 2.500px;
    gap: 1px;
    border-bottom: 2px solid #00b7f1;
}
.tab {
    width: 249px;
    height: 31px;
    display: flex;
    align-items: center;
    padding-left: 7px;
    padding-bottom: 3px;
    background: #1f242c;
    color: #b4b7bb;
    font-size: 15.400px;
}
.tab.active {
    background: #1f242c;
    color: #f4f4f4;
    font-size: 15.200px;
    font-weight: 600;
    border-top: 2px solid #00b7f1;
}
.tab-icon {
    width: 20px;
    height: 20px;
    margin-right: 8px;
}
.tab-close {
    margin-left: auto;
    margin-right: 3px;
    font-size: 16.500px;
    font-weight: 400;
    color: #a0a2a6;
}
.editor-body {
    flex: 1;
    display: flex;
    min-height: 0;
}

/* Designer */
.designer {
    width: 898px;
    display: flex;
    flex-direction: column;
}
.designer-tools {
    height: 36px;
    flex: none;
    display: flex;
    align-items: center;
    padding: 2px 0 0 15px;
    gap: 29.200px;
    background: #14171d;
    border-bottom: 1px solid #272b33;
}
.designer-tools > svg {
    width: 21px;
    height: 21px;
}
.diagram-select {
    margin-left: auto;
    display: flex;
    align-items: center;
    padding-right: 10px;
    font-size: 14.200px;
    color: #eee;
}
.diagram-select svg {
    width: 20px;
    height: 24px;
    margin-right: 13px;
}
.diagram-select .caret {
    margin-left: 10px;
}
.canvas {
    flex: 1;
    position: relative;
    overflow: hidden;
    background-color: #1d2027;
    background-image:
        linear-gradient(#33363e 1px, transparent 1px),
        linear-gradient(90deg, #33363e 1px, transparent 1px),
        linear-gradient(#262931 1px, transparent 1px),
        linear-gradient(90deg, #262931 1px, transparent 1px);
    background-size: 102px 101.500px, 101.500px 102px, 10.200px 10.150px, 10.150px 10.200px;
    background-position: 0 15px, 11px 0, 0 15px, 11px 0;
}
.zoomer {
    position: absolute;
    left: 18px;
    top: 20.500px;
    display: flex;
    align-items: center;
}
.zoom-btn {
    width: 20px;
    height: 20px;
    border-radius: 3px;
    background: #eee;
    color: #333;
    font-size: 16px;
    font-weight: 700;
    line-height: 19px;
    text-align: center;
}
.zoom-track {
    position: relative;
    width: 160px;
    height: 3px;
    margin: 0 13px;
    background: #14161b;
}
.zoom-fill {
    position: absolute;
    left: 0;
    top: 0;
    width: 65px;
    height: 3px;
    background: #00b7f1;
}
.zoom-thumb {
    position: absolute;
    left: 56px;
    top: -7px;
    width: 17px;
    height: 17px;
    border-radius: 50%;
    background: #00b7f1;
}
.links {
    position: absolute;
    left: 0;
    top: 0;
    width: 898px;
    height: 956px;
}
.links text {
    font-family: "Liberation Sans", sans-serif;
    font-size: 13.500px;
    fill: #e2e3e5;
}
.link {
    fill: none;
    stroke: #dcdcdc;
    stroke-width: 1.200;
}
.link-grey {
    stroke: #9a9c9f;
    stroke-width: 1.600;
}
.tip {
    fill: #1d2027;
    stroke: #e0e0e0;
    stroke-width: 1.200;
}
.diamond {
    fill: #000;
    stroke: #e8e8e8;
    stroke-width: 1.200;
}
.diamond-white {
    fill: #fff;
    stroke: #fff;
    stroke-width: 1;
}

/* Diagram nodes */
.node {
    position: absolute;
    width: 224.500px;
    background: #373d4d;
    border: 1.500px solid #c9cacc;
    border-radius: 6px;
    font-family: "Liberation Sans", sans-serif;
    font-size: 12.200px;
    color: #cfd1d4;
}
.node-head {
    height: 30.500px;
    font-weight: 700;
    font-size: 12.200px;
    line-height: 33px;
    text-align: center;
    color: #dfe0e2;
    border-bottom: 1.500px solid #c9cacc;
}
.node-body {
    padding-top: 7.800px;
}
.attr {
    height: 18.270px;
    display: flex;
    align-items: center;
    padding-left: 2.500px;
    padding-right: 4px;
    letter-spacing: -0.050px;
}
.attr b {
    font-weight: 400;
    color: #4d8fdc;
}
.attr b.enum {
    color: #2ec795;
}
.attr em {
    color: #e0e0e0;
}
.c {
    font-style: normal;
    color: #8a8d92;
}
.w {
    flex: none;
    width: 15px;
    height: 15px;
    margin-right: 2px;
}
.k {
    flex: none;
    width: 17px;
    height: 18px;
    margin-left: auto;
}
.node-order {
    left: 11px;
    top: 116px;
    height: 265px;
}
.node-line {
    left: 336.500px;
    top: 116px;
    height: 194px;
    background: #1d2a3a;
}
.node-product {
    left: 662px;
    top: 116px;
    height: 194px;
}
.node-buyer {
    left: 11px;
    top: 472.700px;
    height: 152.500px;
}
.node-address {
    left: 336.500px;
    top: 462px;
    height: 153px;
    background: #45433c;
}
.node-enum {
    background: #65240f;
    color: #e8e2de;
}
.node-status {
    left: 662px;
    top: 381px;
    height: 122px;
}
.node-payment {
    left: 662px;
    top: 584px;
    height: 133px;
}
.literal {
    height: 18.270px;
    padding-left: 7px;
    line-height: 18px;
    font-weight: 400;
}

/* Model panel */
.model {
    width: 312px;
    margin-left: 12px;
    display: flex;
    flex-direction: column;
}
.model-tools {
    height: 73px;
    flex: none;
    display: flex;
    flex-wrap: wrap;
    align-items: center;
    align-content: flex-start;
    padding: 9px 0 0 14.500px;
    column-gap: 29.500px;
    row-gap: 14px;
    background: #14171d;
}
.model-tools svg {
    width: 21px;
    height: 22px;
}
.model-tools svg.small {
    width: 20px;
    height: 20px;
}
.model-tree {
    position: relative;
    height: 811px;
    flex: none;
    overflow: hidden;
    background: #1f242c;
}
.scroll-thumb {
    position: absolute;
    right: 0;
    top: 1px;
    width: 9px;
    height: 338px;
    border-radius: 5px 5px 0 0;
    background: #4c5263;
}
.model-tree .tree {
    padding-top: 8px;
}
.m-row {
    position: relative;
    height: 26.900px;
    display: flex;
    align-items: center;
    width: 303px;
    overflow: hidden;
}
.m-root {
    padding-left: 7px;
    overflow: visible;
}
.root-band {
    flex: 1;
    height: 25px;
    display: flex;
    align-items: center;
    margin-left: 7px;
    padding-left: 2px;
    background: #33322a;
}
.root-band .ti {
    margin-left: 1px;
    margin-right: 8px;
}
.db {
    width: 18px;
    height: 21px;
    margin-left: auto;
    margin-right: 4px;
}
.m-class {
    padding-left: 22.500px;
}
.m-class .ti {
    width: 24px;
    height: 24px;
    margin: 0 7.500px 0 7px;
}
.m-note {
    position: absolute;
    left: 65px;
    top: 0;
    width: 14px;
    height: 9px;
    border-radius: 2px;
    background: #4cae50;
}
.m-note::after {
    content: "";
    position: absolute;
    left: 3px;
    top: 4px;
    width: 8px;
    height: 1.500px;
    background-image: linear-gradient(90deg, #1f5e28 50%, transparent 50%);
    background-size: 3px 100%;
}
.m-name {
    position: relative;
}
.m-attr {
    padding-left: 59px;
}
.m-attr .ti {
    width: 22px;
    height: 22px;
    margin-right: 8px;
}
.m-text {
    min-width: 0;
    flex: 1;
    color: #c8cacd;
    white-space: nowrap;
    overflow: hidden;
    text-overflow: ellipsis;
}
.m-free {
    overflow: visible;
    text-overflow: clip;
}
.m-text .c {
    margin-right: 3px;
}
.m-text b {
    font-weight: 400;
    color: #4a92e8;
}
.m-text b.enum {
    color: #2ec795;
}
.m-text em {
    margin-left: 1px;
    color: #e8e8e8;
}
.m-key {
    flex: none;
    width: 22px;
    height: 24px;
    margin-right: 1px;
}
.model-gap {
    height: 11px;
    flex: none;
    border-top: 1px solid #30343d;
}
.model-foot {
    flex: 1;
    background: #1e232b;
}

/* Assistant */
.assistant {
    width: 371px;
    margin-left: 13px;
    display: flex;
    flex-direction: column;
    border-left: 1px solid #30343e;
}
.assistant-head {
    height: 38px;
    flex: none;
    display: flex;
    align-items: center;
    padding-left: 7px;
    background: #0a0c0f;
    border-bottom: 2px solid #555a66;
}
.ai-logo {
    width: 24px;
    height: 24px;
}
.assistant-head h2 {
    margin-left: 4px;
    font-size: 15.500px;
    font-weight: 600;
    color: #f4f4f4;
}
.ai-close {
    margin-left: auto;
    margin-right: 11px;
    padding-top: 3px;
    font-size: 15px;
    font-weight: 700;
    color: #d8d8d8;
}
.chat-bar {
    height: 37px;
    flex: none;
    display: flex;
    align-items: center;
    padding-left: 11.500px;
    background: #0b0d10;
}
.chat-title {
    width: 260px;
    padding-bottom: 2px;
    font-size: 15.700px;
    color: #f0f0f0;
    white-space: nowrap;
    overflow: hidden;
}
.chat-add {
    width: 14px;
    height: 14px;
    margin-left: 8px;
}
.chat-icon {
    width: 17px;
    height: 17px;
    margin-left: 15px;
}
.chat-icon:last-child {
    margin-left: 16px;
}
.chat {
    position: relative;
    height: 765px;
    flex: none;
    overflow: hidden;
    background: linear-gradient(90deg, #171a20 361px, #1b1e24 361px);
}
.chat-thumb {
    position: absolute;
    right: 0;
    top: 32px;
    width: 9px;
    height: 181px;
    border-radius: 5px;
    background: #4c5263;
}
.bubble {
    width: 324px;
    height: 50px;
    margin: -30px 0 14px 22px;
    padding-top: 15px;
    border-radius: 16px;
    background: #2f3340;
    font-size: 14.500px;
    line-height: 20px;
    text-align: center;
    color: #e0e0e0;
}
.step {
    position: relative;
    padding-left: 31.500px;
    padding-bottom: 14px;
}
.step::before {
    content: "";
    position: absolute;
    left: 14.500px;
    top: 8px;
    bottom: -8px;
    width: 3px;
    background: #2c3038;
}
.dot {
    position: absolute;
    left: 6px;
    top: -2px;
    width: 20px;
    height: 20px;
    padding: 3px;
    border-radius: 50%;
    background: #1f3342;
    box-shadow: 0 0 0 1px #272b33;
}
.step-label {
    height: 18px;
    font-size: 12.300px;
    font-weight: 700;
    line-height: 18px;
    letter-spacing: 0.850px;
    text-transform: uppercase;
    white-space: nowrap;
    color: #58a6e0;
}
.step-label.green {
    color: #5fb06a;
}
.step-desc {
    height: 24px;
    margin: 1px 0 13px;
    font-size: 14.400px;
    line-height: 24px;
    color: #d6d8dc;
}
.step-short .step-desc {
    margin-bottom: 1px;
}
.pill {
    height: 30px;
    width: fit-content;
    display: flex;
    align-items: center;
    padding: 0 11px 0 10.500px;
    border-radius: 15px;
    background: #12233a;
    border: 1px solid #2d3f58;
    font-size: 14.500px;
    color: #e4e6e8;
    white-space: nowrap;
}
.pill-icon {
    width: 18px;
    height: 18px;
    margin-right: 5px;
}
.pill-wide {
    width: 317px;
}
.pill-sub {
    margin-left: 6px;
    font-size: 13.500px;
    color: #767a80;
}
.pill-green {
    background: #133524;
    border-color: #1d6a35;
    padding: 0 10px 0 11.500px;
}
.pill-chev {
    width: 15px;
    height: 10px;
    margin-right: 8px;
}
.scroll-down {
    position: absolute;
    left: 163px;
    top: 696px;
    width: 44px;
    height: 44px;
    display: flex;
    align-items: center;
    justify-content: center;
    border-radius: 50%;
    background: #20232b;
    border: 1px solid #3c404a;
    z-index: 2;
}
.scroll-down svg {
    width: 15px;
    height: 17px;
}
.composer {
    flex: 1;
    background: #0b0d10;
    border-top: 1px solid #30343e;
}
.changes {
    height: 38px;
    display: flex;
    align-items: center;
    padding-left: 11px;
    font-size: 14px;
    color: #85888c;
}
.changes strong {
    margin-left: 6px;
    font-weight: 700;
    color: #f0f0f0;
}
.changes span {
    margin-left: 10px;
}
.changes-chev {
    width: 9px;
    height: 14px;
}
.usage {
    height: 20px;
    margin-top: 5px;
    padding-left: 13px;
    font-size: 12.800px;
    line-height: 20px;
    color: #85888c;
}
.usage-bar {
    height: 5px;
    margin: 1px 11px 0 12px;
    border-radius: 3px;
    background: #24272d;
    overflow: hidden;
}
.usage-fill {
    display: block;
    width: 7px;
    height: 5px;
    background: #0a6ec4;
}
.ask {
    height: 69px;
    display: flex;
    align-items: center;
    justify-content: space-between;
    padding: 0 26px 0 19px;
    font-size: 16px;
    color: #5d6066;
}
.ask svg {
    width: 17px;
    height: 17px;
}
.composer-tools {
    display: flex;
    align-items: center;
    padding-left: 11px;
}
.round-add {
    width: 30px;
    height: 30px;
    display: flex;
    align-items: center;
    justify-content: center;
    border-radius: 50%;
    border: 1px solid #5f6368;
}
.round-add svg {
    width: 13px;
    height: 13px;
}
.mode-btn {
    height: 33px;
    display: flex;
    align-items: center;
    padding-left: 10px;
    border: 1px solid #33373f;
    border-radius: 6px;
    font-size: 14px;
    color: #e8e8e8;
}
.mode-btn svg {
    width: 16px;
    height: 16px;
    margin-right: 7px;
}
.mode-btn .caret {
    margin-left: 8px;
    border-top-color: #9a9c9f;
}
.mode-agent {
    width: 98px;
    margin-left: 11px;
}
.mode-model {
    width: 107px;
    margin-left: 10px;
}
.spinner {
    width: 22px;
    height: 22px;
    margin-left: 59px;
}

/* Status bar */
.statusbar {
    height: 32px;
    flex: none;
    display: flex;
    align-items: center;
    padding-left: 15px;
    background: #171a20;
    border-top: 1px solid #30343e;
    font-size: 13.600px;
    color: #e8e8e8;
}
.status-ring {
    width: 15px;
    height: 15px;
    margin-right: 6px;
    border: 2px solid #e8e8e8;
    border-radius: 50%;
}
```
